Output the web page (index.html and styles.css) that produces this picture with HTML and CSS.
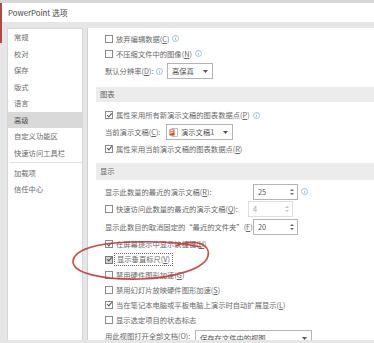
FILE: index.html
```html
<!DOCTYPE html>
<html lang="zh-CN">
<head>
<meta charset="utf-8">
<title>PowerPoint 选项</title>
<link rel="stylesheet" href="styles.css">
</head>
<body>
<div class="window">
  <div class="edge"></div>
  <div class="titlebar">PowerPoint 选项</div>
  <div class="main">
    <nav class="nav">
      <div class="nav-item">常规</div>
      <div class="nav-item">校对</div>
      <div class="nav-item">保存</div>
      <div class="nav-item">版式</div>
      <div class="nav-item">语言</div>
      <div class="nav-item selected">高级</div>
      <div class="nav-item">自定义功能区</div>
      <div class="nav-item">快速访问工具栏</div>
      <div class="nav-sep"></div>
      <div class="nav-item">加载项</div>
      <div class="nav-item">信任中心</div>
    </nav>
    <main class="content">
      <div class="row first">
        <span class="cb"></span><span>放弃编辑数据(<u>C</u>)</span>
        <svg class="info" viewBox="0 0 7 7"><circle cx="3.5" cy="3.5" r="3"/><line x1="3.5" y1="3" x2="3.5" y2="5.3"/><circle class="dot" cx="3.5" cy="1.9" r="0.45"/></svg>
      </div>
      <div class="row">
        <span class="cb"></span><span>不压缩文件中的图像(<u>N</u>)</span>
        <svg class="info" viewBox="0 0 7 7"><circle cx="3.5" cy="3.5" r="3"/><line x1="3.5" y1="3" x2="3.5" y2="5.3"/><circle class="dot" cx="3.5" cy="1.9" r="0.45"/></svg>
      </div>
      <div class="row tall">
        <span class="flabel lw-res">默认分辨率(<u>D</u>):
          <svg class="info" viewBox="0 0 7 7"><circle cx="3.5" cy="3.5" r="3"/><line x1="3.5" y1="3" x2="3.5" y2="5.3"/><circle class="dot" cx="3.5" cy="1.9" r="0.45"/></svg>
        </span>
        <span class="select sel-res"><span class="sel-text">高保真</span><svg class="arrow" viewBox="0 0 5 3"><polygon points="0,0 5,0 2.5,3"/></svg></span>
      </div>

      <div class="section s1">图表</div>
      <div class="row h16">
        <span class="cb checked"></span><span>属性采用所有新演示文稿的图表数据点(<u>P</u>)</span>
        <svg class="info" viewBox="0 0 7 7"><circle cx="3.5" cy="3.5" r="3"/><line x1="3.5" y1="3" x2="3.5" y2="5.3"/><circle class="dot" cx="3.5" cy="1.9" r="0.45"/></svg>
      </div>
      <div class="row h18">
        <span class="flabel lw-doc">当前演示文稿(<u>C</u>):</span>
        <span class="select sel-doc">
          <svg class="ppt" viewBox="0 0 9 9"><rect class="page" x="3" y="0.5" width="5.5" height="8"/><rect class="badge" x="0.5" y="1.5" width="5" height="6"/><text x="3" y="6.4">P</text></svg>
          <span class="sel-text">演示文稿1</span><svg class="arrow" viewBox="0 0 5 3"><polygon points="0,0 5,0 2.5,3"/></svg></span>
      </div>
      <div class="row">
        <span class="cb checked"></span><span>属性采用当前演示文稿的图表数据点(<u>R</u>)</span>
      </div>

      <div class="section s2">显示</div>
      <div class="row h17 sp1">
        <span class="flabel lw-spin">显示此数量的最近的演示文稿(<u>R</u>):</span>
        <span class="spin"><span>25</span><span class="spin-arrows"><i class="up"></i><i class="down"></i></span></span>
        <svg class="info" viewBox="0 0 7 7"><circle cx="3.5" cy="3.5" r="3"/><line x1="3.5" y1="3" x2="3.5" y2="5.3"/><circle class="dot" cx="3.5" cy="1.9" r="0.45"/></svg>
      </div>
      <div class="row h18">
        <span class="cb"></span><span class="flabel lw-spin2">快速访问此数量的最近的演示文稿(<u>Q</u>):</span>
        <span class="spin disabled"><span>4</span><span class="spin-arrows"><i class="up"></i><i class="down"></i></span></span>
      </div>
      <div class="row h18">
        <span class="flabel lw-spin">显示此数目的取消固定的“最近的文件夹”(<u>F</u>):</span>
        <span class="spin"><span>20</span><span class="spin-arrows"><i class="up"></i><i class="down"></i></span></span>
      </div>
      <div class="row h16">
        <span class="cb checked"></span><span>在屏幕提示中显示快捷键(<u>H</u>)</span>
      </div>
      <div class="row">
        <span class="cb checked focus-cb"></span><span class="focus">显示垂直标尺(<u>V</u>)</span>
      </div>
      <div class="row">
        <span class="cb"></span><span>禁用硬件图形加速(<u>G</u>)</span>
      </div>
      <div class="row">
        <span class="cb"></span><span>禁用幻灯片放映硬件图形加速(<u>S</u>)</span>
      </div>
      <div class="row">
        <span class="cb checked"></span><span>当在笔记本电脑或平板电脑上演示时自动扩展显示(<u>L</u>)</span>
      </div>
      <div class="row">
        <span class="cb"></span><span>显示选定项目的状态标志</span>
      </div>
      <div class="row h18">
        <span class="flabel lw-view">用此视图打开全部文档(<u>O</u>):</span>
        <span class="select sel-view"><span class="sel-text">保存在文件中的视图</span><svg class="arrow" viewBox="0 0 5 3"><polygon points="0,0 5,0 2.5,3"/></svg></span>
      </div>
    </main>
  </div>
  <svg class="annot" viewBox="0 0 374 343">
    <path d="M 176 246 C 194 238, 211 244, 208 256 C 205 268, 176 278, 140 279 C 102 280, 72 273, 73 261 C 74 250, 96 243, 130 242 C 160 241, 184 243, 201 247"/>
  </svg>
</div>
</body>
</html>
```

FILE: styles.css
```css
html, body {
  margin: 0;
  padding: 0;
}

body {
  width: 374px;
  height: 343px;
  overflow: hidden;
  background: #e6e6e6;
  font-family: "Noto Sans CJK SC", "Noto Sans", sans-serif;
  font-size: 7.3px;
  color: #676767;
}

.window {
  position: relative;
  height: 343px;
  box-sizing: border-box;
  border-top: 3px solid #d8d8d8;
}

.edge {
  position: absolute;
  left: 0;
  top: 0;
  width: 2px;
  height: 40px;
  background: #b04a3c;
}

.titlebar {
  height: 19px;
  line-height: 19px;
  padding-left: 8px;
  background: #fff;
  color: #444;
  font-size: 7.8px;
}

.main {
  display: flex;
  padding: 6px 0 0 7px;
  height: 312px;
}

.nav {
  width: 74px;
  flex: none;
  background: #fff;
  border: 1px solid #d6d6d6;
  border-bottom: none;
}

.nav-item {
  height: 16.5px;
  line-height: 16.5px;
  padding-left: 6px;
  color: #6a6a6a;
}

.nav-item.selected {
  background: #d9d9d9;
  color: #555;
}

.nav-sep {
  height: 1px;
  margin: 1px 0 1.5px 2px;
  background: #e2e2e2;
}

.content {
  flex: 1;
  margin-left: 4px;
  background: #fff;
  border-left: 1px solid #d0d0d0;
  padding: 3px 0 0 8px;
  overflow: hidden;
}

.row {
  display: flex;
  align-items: center;
  height: 15px;
  padding-left: 9px;
  white-space: nowrap;
}

.row.tall { height: 20px; }
.row.h16 { height: 16px; }
.row.h17 { height: 17px; }
.row.h18 { height: 18px; }
.row.sp1 { margin-top: 3px; }

u {
  text-decoration: underline;
  text-underline-offset: 1px;
}

.cb {
  position: relative;
  width: 6px;
  height: 6px;
  flex: none;
  border: 1px solid #8a8a8a;
  background: #fff;
  margin-right: 3px;
}

.cb.checked::after {
  content: "";
  position: absolute;
  left: 1.6px;
  top: -0.2px;
  width: 1.6px;
  height: 3.8px;
  border-right: 1px solid #555;
  border-bottom: 1px solid #555;
  transform: rotate(40deg);
}

.cb.focus-cb {
  background: #d2d2d2;
  border-color: #777;
}

.focus {
  outline: 1px dotted #666;
  padding: 0 2px;
  margin-left: -1px;
  line-height: 11px;
}

.info {
  width: 7px;
  height: 7px;
  flex: none;
  margin-left: 3px;
  fill: none;
  stroke: #7aa8d8;
  stroke-width: 0.7;
}

.info .dot {
  fill: #7aa8d8;
  stroke: none;
}

.flabel {
  display: flex;
  align-items: center;
  flex: none;
}

.lw-res { width: 62px; }
.lw-doc { width: 61px; }
.lw-view { width: 90px; }
.lw-spin { width: 148px; }
.lw-spin2 { width: 132px; }

.select {
  display: flex;
  align-items: center;
  box-sizing: border-box;
  border: 1px solid #b4b4b4;
  background: #fff;
  padding: 0 4px;
  color: #555;
}

.sel-res { width: 46px; height: 16px; }
.sel-doc { width: 67px; height: 16px; padding-left: 2px; }
.sel-view { width: 117px; height: 16px; margin-top: 4px; }

.sel-text {
  flex: 1;
}

.arrow {
  width: 5px;
  height: 3px;
  fill: #555;
  flex: none;
}

.ppt {
  width: 9px;
  height: 9px;
  flex: none;
  margin-right: 3px;
}

.ppt .page {
  fill: #fff;
  stroke: #999;
  stroke-width: 0.6;
}

.ppt .badge {
  fill: #d24726;
}

.ppt text {
  fill: #fff;
  font-family: "Liberation Sans", sans-serif;
  font-size: 5px;
  font-weight: bold;
  text-anchor: middle;
}

.spin {
  display: flex;
  align-items: center;
  justify-content: space-between;
  width: 45px;
  height: 16px;
  box-sizing: border-box;
  border: 1px solid #b4b4b4;
  padding: 0 3px 0 4px;
  color: #555;
  flex: none;
}

.spin.disabled {
  border-color: #dedede;
  color: #a8a8a8;
}

.spin-arrows {
  display: flex;
  flex-direction: column;
  gap: 2px;
}

.spin-arrows i {
  display: block;
  width: 0;
  height: 0;
  border-left: 2px solid transparent;
  border-right: 2px solid transparent;
}

.spin-arrows .up { border-bottom: 2px solid #666; }
.spin-arrows .down { border-top: 2px solid #666; }
.spin.disabled .spin-arrows .up { border-bottom-color: #c4c4c4; }
.spin.disabled .spin-arrows .down { border-top-color: #c4c4c4; }

.section {
  height: 15px;
  line-height: 15px;
  background: #ececec;
  padding-left: 4px;
  color: #666;
}

.section.s1 { margin: 6px 0 5px; }
.section.s2 { height: 17px; line-height: 17px; margin: 7px 0 0; }

.annot {
  position: absolute;
  left: 0;
  top: -3px;
  width: 374px;
  height: 343px;
  pointer-events: none;
  fill: none;
  stroke: #c23a3a;
  stroke-width: 1.6;
  stroke-linecap: round;
  opacity: 0.9;
}
```
